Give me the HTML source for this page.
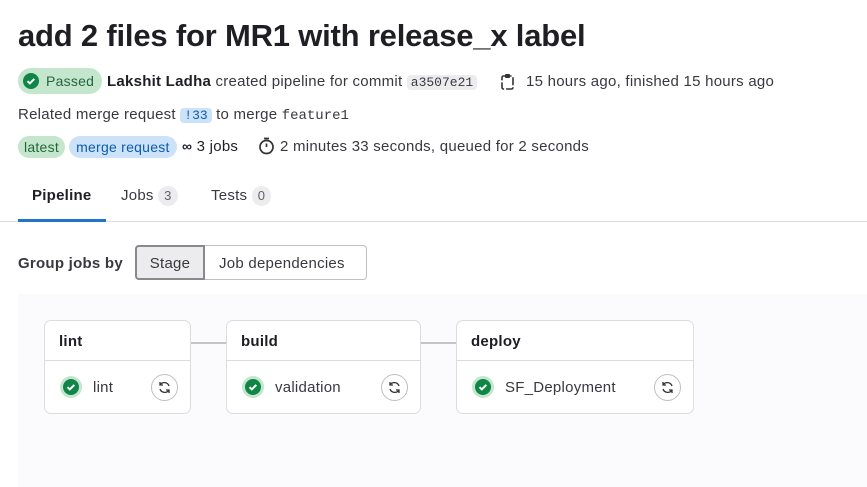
<!DOCTYPE html>
<html><head><style>
body{margin:0;width:867px;height:487px;background:#fff;font-family:"Liberation Sans",sans-serif;color:#3a383f;position:relative;overflow:hidden;letter-spacing:0.25px}
.a{position:absolute;white-space:nowrap}
h1{position:absolute;left:18px;top:18px;margin:0;font-size:31px;font-weight:bold;color:#1f1e24;letter-spacing:-0.2px}
.badge{display:inline-block;border-radius:12px;padding:0 7px;height:22px;line-height:22px;font-size:14px}
.code{font-family:"Liberation Mono",monospace;background:#ececef;border-radius:4px;padding:0 4px;font-size:13px;letter-spacing:0}
.card{position:absolute;top:320px;height:92px;background:#fff;border:1px solid #dcdcde;border-radius:7px}
.card .h{height:39px;border-bottom:1px solid #dcdcde;font-weight:bold;font-size:15px;color:#1f1e24;padding-left:14px;line-height:41px}
.card .r{position:relative;height:52px;font-size:15px;line-height:54px;padding-left:48px}
.ok{position:absolute;left:15px;top:15px;width:22px;height:22px;border-radius:50%;background:#c3e6cd}
.ok:after{content:"";position:absolute;left:3px;top:3px;width:16px;height:16px;border-radius:50%;background:#108548}
.ok svg{position:absolute;left:6px;top:6px;z-index:1}
.rt{position:absolute;right:12px;top:13px;width:27px;height:27px;border:1px solid #bfbfc3;border-radius:50%;box-sizing:border-box}
.rt svg{position:absolute;left:6px;top:6px}
.ln{position:absolute;top:342px;height:2px;background:#c4c4c7}
</style></head><body>
<h1>add 2 files for MR1 with release_x label</h1>
<div class="a" style="left:18px;top:68px;height:26px;width:84px;border-radius:13px;background:#c3e6cd"></div>
<div class="a" style="left:23px;top:73px;width:16px;height:16px;border-radius:50%;background:#108548"><svg width="16" height="16"><path d="M4.5 8.2l2.3 2.2 4.5-4.5" stroke="#fff" stroke-width="2" fill="none"/></svg></div>
<div class="a" style="left:46px;top:73px;font-size:14px;color:#24663b">Passed</div>
<div class="a" style="left:107px;top:73px;font-size:15px"><b style="color:#1f1e24">Lakshit Ladha</b> created pipeline for commit <span class="code">a3507e21</span></div>
<svg class="a" style="left:500px;top:73px" width="16" height="18"><rect x="2" y="3" width="11" height="13" rx="1.5" fill="none" stroke="#333" stroke-width="1.6" stroke-dasharray="8 2"/><rect x="5" y="1" width="5" height="4" rx="1" fill="#333"/></svg>
<div class="a" style="left:526px;top:73px;font-size:15px">15 hours ago, finished 15 hours ago</div>
<div class="a" style="left:18px;top:106px;font-size:15px">Related merge request <span class="code" style="background:#cbe2f9;color:#0b5cad">!33</span> to merge <span style="font-family:'Liberation Mono',monospace;font-size:14px;letter-spacing:0">feature1</span></div>
<div class="a" style="left:18px;top:136px;font-size:14px"><span class="badge" style="background:#c3e6cd;color:#24663b;padding:0 6px">latest</span> <span class="badge" style="background:#cbe2f9;color:#0b5cad">merge request</span></div>
<div class="a" style="left:182px;top:138px;font-size:15px;color:#1f1e24"><b style="font-size:14px">&#x221E;</b> 3 jobs</div>
<svg class="a" style="left:258px;top:137px" width="17" height="18"><circle cx="8.5" cy="10" r="6.5" fill="none" stroke="#333" stroke-width="1.7"/><path d="M8.5 10V6.5M6 1.5h5" stroke="#333" stroke-width="1.7"/></svg>
<div class="a" style="left:280px;top:138px;font-size:15px">2 minutes 33 seconds, queued for 2 seconds</div>
<div class="a" style="left:32px;top:187px;font-size:15px;font-weight:bold;color:#1f1e24">Pipeline</div>
<div class="a" style="left:121px;top:186px;font-size:15px">Jobs <span style="display:inline-block;background:#ececef;border-radius:10px;padding:0 6px;font-size:13px;color:#626168;line-height:20px">3</span></div>
<div class="a" style="left:211px;top:186px;font-size:15px">Tests <span style="display:inline-block;background:#ececef;border-radius:10px;padding:0 6px;font-size:13px;color:#626168;line-height:20px">0</span></div>
<div class="a" style="left:0;top:221px;width:867px;height:1px;background:#dcdcde"></div>
<div class="a" style="left:18px;top:219px;width:88px;height:3px;background:#1f75cb"></div>
<div class="a" style="left:18px;top:255px;font-size:15px;font-weight:bold;color:#3a383f">Group jobs by</div>
<div class="a" style="left:135px;top:245px;width:232px;height:35px;border:1px solid #bfbfc3;border-radius:4px;box-sizing:border-box"></div>
<div class="a" style="left:135px;top:245px;width:70px;height:35px;border:2px solid #89888d;border-radius:4px 0 0 4px;background:#ececef;box-sizing:border-box;text-align:center;line-height:33px;font-size:15px">Stage</div>
<div class="a" style="left:219px;top:255px;font-size:15px">Job dependencies</div>
<div class="a" style="left:18px;top:294px;width:849px;height:193px;background:#fbfafd"></div>
<div class="ln" style="left:190px;width:36px"></div>
<div class="ln" style="left:420px;width:36px"></div>
<div class="card" style="left:44px;width:145px"><div class="h">lint</div><div class="r"><span class="ok"><svg width="10" height="10"><path d="M1.5 5.2l2.3 2.2 4.5-4.5" stroke="#fff" stroke-width="2" fill="none"/></svg></span>lint<span class="rt"><svg width="13" height="13"><path d="M11 5A5 5 0 0 0 2 4M2 8a5 5 0 0 0 9 1M2 1v3h3M11 12V9H8" stroke="#333" stroke-width="1.3" fill="none"/></svg></span></div></div>
<div class="card" style="left:226px;width:193px"><div class="h">build</div><div class="r"><span class="ok"><svg width="10" height="10"><path d="M1.5 5.2l2.3 2.2 4.5-4.5" stroke="#fff" stroke-width="2" fill="none"/></svg></span>validation<span class="rt"><svg width="13" height="13"><path d="M11 5A5 5 0 0 0 2 4M2 8a5 5 0 0 0 9 1M2 1v3h3M11 12V9H8" stroke="#333" stroke-width="1.3" fill="none"/></svg></span></div></div>
<div class="card" style="left:456px;width:236px"><div class="h">deploy</div><div class="r"><span class="ok"><svg width="10" height="10"><path d="M1.5 5.2l2.3 2.2 4.5-4.5" stroke="#fff" stroke-width="2" fill="none"/></svg></span>SF_Deployment<span class="rt"><svg width="13" height="13"><path d="M11 5A5 5 0 0 0 2 4M2 8a5 5 0 0 0 9 1M2 1v3h3M11 12V9H8" stroke="#333" stroke-width="1.3" fill="none"/></svg></span></div></div>
</body></html>
